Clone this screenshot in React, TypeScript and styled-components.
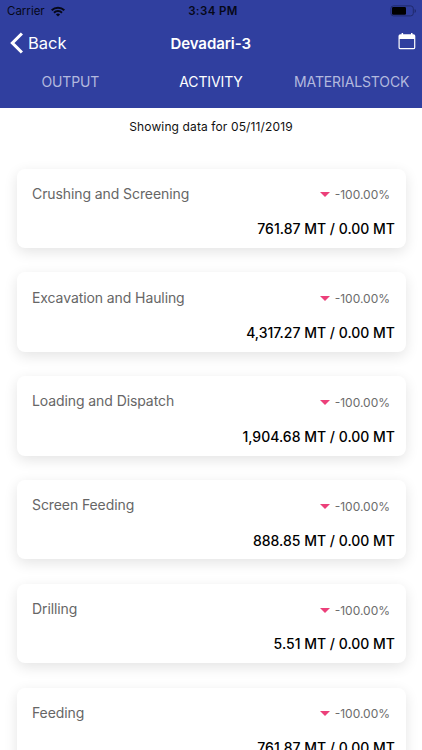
import React from 'react';
import styled, { createGlobalStyle } from 'styled-components';

const Global = createGlobalStyle`
  * { box-sizing: border-box; }
  body { margin: 0; background: #fff; font-family: Inter, "Liberation Sans", sans-serif; }
`;
const Screen = styled.main`height: 750px; overflow: hidden; background: #fff;`;
const Header = styled.header`height: 108.4px; background: #303f9f; color: #fff;`;
const Status = styled.div`
  height: 22px; padding: 0 5px 0 7px; display: grid; grid-template-columns: 1fr auto 1fr; align-items: center;
  color: #060818; font-size: 11.5px;
`;
const Carrier = styled.div`display: flex; align-items: center; gap: 6px;`;
const Time = styled.div`font-weight: 600; letter-spacing: 0.4px; margin-right: -2px;`;
const Battery = styled.svg`justify-self: end; display: block;`;
const NavBar = styled.div`
  height: 42px; padding: 0 6px 0 9.5px; display: grid; grid-template-columns: 1fr auto 1fr; align-items: center;
`;
const Back = styled.button`
  border: 0; padding: 0; background: none; color: #fff; display: flex; align-items: center; gap: 4.5px;
  font: 16.5px Inter, sans-serif;
`;
const Title = styled.h1`margin: 0 4px 0 0; font-size: 15px; font-weight: 600; letter-spacing: -0.05px;`;
const Calendar = styled.svg`justify-self: end; display: block; margin-bottom: 4px;`;
const Tabs = styled.nav`height: 35px; display: grid; grid-template-columns: repeat(3, 1fr);`;
const Tab = styled.div<{ $active?: boolean }>`
  display: flex; align-items: center; justify-content: center; font-size: 14px; letter-spacing: -0.12px;
  color: ${p => p.$active ? '#fff' : '#b3b9de'};
`;
const Note = styled.p`
  margin: 0; height: 60.2px; padding-top: 11px; text-align: center; font-size: 12px;
  line-height: 16px; letter-spacing: 0.12px; color: #111;
`;
const List = styled.section`display: flex; flex-direction: column; gap: 24.3px; padding: 0 16.5px;`;
const Card = styled.article`
  height: 79.5px; flex: none; border-radius: 8px; background: #fff; box-shadow: 0 4px 14px rgba(0,0,0,.11);
  padding: 14.8px 10.5px 0 15.5px;
`;
const Row = styled.div`display: flex; align-items: center; justify-content: space-between; height: 20px; padding-right: 5px;`;
const Name = styled.span`font-size: 14px; letter-spacing: -0.09px; color: #666;`;
const Change = styled.span`
  display: flex; align-items: center; gap: 5px; padding-top: 3px; font-size: 12px; color: #6c6c6c;
`;
const Value = styled.div`margin-top: 16.9px; text-align: right; font-size: 14px; line-height: 18px; font-weight: 500; color: #000;`;

const WifiIcon = () => (
  <svg width="14" height="11" viewBox="0 0 14 11" fill="none" stroke="currentColor" strokeWidth="2">
    <path d="M.7 4.2a9 9 0 0 1 12.6 0M3 6.7a5.7 5.7 0 0 1 8 0" />
    <path d="M7 10.6 4.9 8.5a3 3 0 0 1 4.2 0Z" fill="currentColor" stroke="none" />
  </svg>
);
const Chevron = () => (
  <svg width="14" height="22" viewBox="0 0 14 22" fill="none" stroke="currentColor" strokeWidth="3.1">
    <path d="M11.9 1.5 2.4 11l9.5 9.5" />
  </svg>
);
const DownIcon = () => (
  <svg width="10" height="5" viewBox="0 0 10 5"><path d="M0 0h10L5 5Z" fill="#ec407a" /></svg>
);

const activities = [
  { name: 'Crushing and Screening', amount: '761.87' },
  { name: 'Excavation and Hauling', amount: '4,317.27' },
  { name: 'Loading and Dispatch', amount: '1,904.68' },
  { name: 'Screen Feeding', amount: '888.85' },
  { name: 'Drilling', amount: '5.51' },
  { name: 'Feeding', amount: '761.87' },
];

export default function App() {
  return (
    <Screen>
      <Global />
      <Header>
        <Status>
          <Carrier>Carrier <WifiIcon /></Carrier>
          <Time>3:34 PM</Time>
          <Battery width="27" height="12" viewBox="0 0 27 12">
            <rect x=".9" y=".9" width="22.4" height="10" rx="2.6" fill="none" stroke="#202a6c" />
            <rect x="2" y="2" width="14" height="7.8" rx="1.2" fill="#000" />
            <path d="M24.6 4v4q1.4-.5 1.4-2t-1.4-2" fill="#202a6c" />
          </Battery>
        </Status>
        <NavBar>
          <Back aria-label="Back"><Chevron />Back</Back>
          <Title>Devadari-3</Title>
          <Calendar width="18" height="17" viewBox="0 0 18 17">
            <path d="M3.6 0h1.5v2H3.6ZM13 0h1.5v2H13Z" fill="#fff" />
            <rect x="1.1" y="1.8" width="15.6" height="13.9" rx="1.3" fill="none" stroke="#fff" strokeWidth="1.2" />
            <path d="M1 2h16v4H1Z" fill="#fff" />
          </Calendar>
        </NavBar>
        <Tabs><Tab>OUTPUT</Tab><Tab $active>ACTIVITY</Tab><Tab>MATERIALSTOCK</Tab></Tabs>
      </Header>
      <Note>Showing data for 05/11/2019</Note>
      <List>
        {activities.map(({ name, amount }) => (
          <Card key={name}>
            <Row><Name>{name}</Name><Change><DownIcon />-100.00%</Change></Row>
            <Value>{amount} MT / 0.00 MT</Value>
          </Card>
        ))}
      </List>
    </Screen>
  );
}
